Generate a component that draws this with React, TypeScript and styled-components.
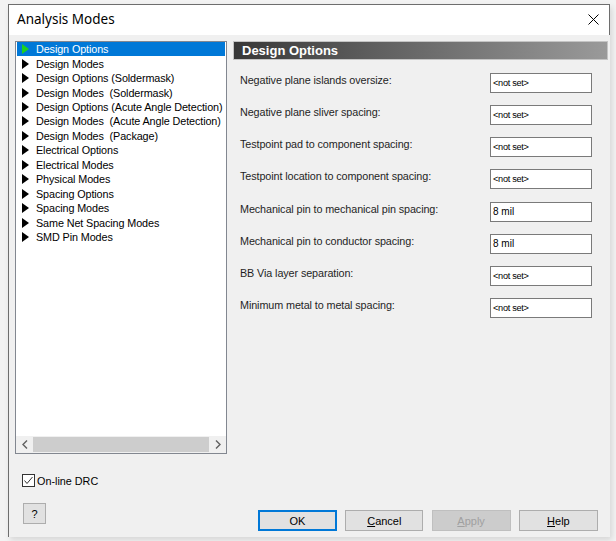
import React from "react";
import styled, { createGlobalStyle } from "styled-components";

const GlobalStyle = createGlobalStyle`
    html, body {
        margin: 0;
        padding: 0;
        background: #f3f3f3;
    }
    body {
        font-family: "Liberation Sans", Arial, sans-serif;
        font-size: 10.8px;
        color: #000;
    }
`;

const Page = styled.div`
    width: 616px;
    height: 541px;
    padding: 4px 0 0 8px;
    box-sizing: border-box;
`;

const Window = styled.div`
    width: 602px;
    height: 533px;
    display: flex;
    flex-direction: column;
    border-left: 1px solid #6e6e6e;
    border-top: 1px solid #6e6e6e;
    box-sizing: border-box;
    box-shadow: 2px 3px 6px rgba(0, 0, 0, 0.12);
`;

const TitleBar = styled.div`
    height: 30px;
    flex: none;
    display: flex;
    align-items: center;
    justify-content: space-between;
    background: #ffffff;
    border-right: 1px solid #6e6e6e;
    padding: 0 8px 0 8px;
`;

const Title = styled.span`
    font-family: "Noto Sans", "Liberation Sans", sans-serif;
    font-size: 13.5px;
    color: #000;
    margin-top: -2px;
`;

const CloseIcon = styled.svg`
    width: 11px;
    height: 11px;
    margin-right: 2px;
    margin-top: -2px;
`;

const Body = styled.div`
    flex: 1;
    display: flex;
    gap: 6px;
    background: #f0f0f0;
    padding: 6px 2px 0 6px;
`;

const LeftColumn = styled.div`
    width: 212px;
    display: flex;
    flex-direction: column;
`;

const ListBox = styled.div`
    height: 413px;
    display: flex;
    flex-direction: column;
    background: #ffffff;
    border: 1px solid #828790;
    box-sizing: border-box;
`;

const Items = styled.div`
    flex: 1;
    padding: 0 1px;
`;

const Item = styled.div<{ selected?: boolean }>`
    height: 14.46px;
    display: flex;
    align-items: center;
    gap: 7px;
    padding-left: 5px;
    white-space: pre;
    letter-spacing: -0.1px;
    background: ${p => (p.selected ? "#0078d7" : "transparent")};
    color: ${p => (p.selected ? "#ffffff" : "#000000")};
`;

const Arrow = styled.span<{ selected?: boolean }>`
    width: 0;
    height: 0;
    border-top: 5px solid transparent;
    border-bottom: 5px solid transparent;
    border-left: 7px solid ${p => (p.selected ? "#1fd01f" : "#000000")};
`;

const ScrollBar = styled.div`
    height: 17px;
    display: flex;
    align-items: stretch;
    background: #f0f0f0;
`;

const ScrollArrow = styled.div`
    width: 17px;
    display: flex;
    align-items: center;
    justify-content: center;
`;

const Thumb = styled.div`
    flex: 1;
    margin: 1px 0;
    background: #cdcdcd;
`;

const CheckRow = styled.label`
    display: flex;
    align-items: center;
    gap: 2px;
    margin: 20px 0 0 7px;
`;

const CheckBox = styled.span`
    width: 13px;
    height: 13px;
    box-sizing: border-box;
    border: 1px solid #333333;
    background: #ffffff;
    display: flex;
    align-items: center;
    justify-content: center;
`;

const Button = styled.div<{ primary?: boolean; disabled?: boolean; width?: number }>`
    width: ${p => p.width ?? 79}px;
    height: 21px;
    box-sizing: border-box;
    display: flex;
    align-items: center;
    justify-content: center;
    font-size: 11px;
    background: ${p => (p.disabled ? "#cccccc" : "#e1e1e1")};
    color: ${p => (p.disabled ? "#a0a0a0" : "#000000")};
    border: 1px solid ${p => (p.primary ? "#0078d7" : p.disabled ? "#bfbfbf" : "#adadad")};
    box-shadow: ${p => (p.primary ? "inset 0 0 0 1px #0078d7" : "none")};
`;

const HelpButton = styled(Button)`
    margin: 16px 0 0 8px;
    width: 23px;
`;

const Underline = styled.span`
    text-decoration: underline;
`;

const RightColumn = styled.div`
    flex: 1;
    display: flex;
    flex-direction: column;
`;

const Header = styled.div`
    height: 19px;
    box-sizing: border-box;
    display: flex;
    align-items: center;
    padding-left: 8px;
    border: 1px solid #c4c4c4;
    background: linear-gradient(to right, #383838 0%, #5c5c5c 35%, #9a9a9a 100%);
    color: #ffffff;
    font-weight: bold;
    font-size: 13px;
`;

const Form = styled.div`
    display: flex;
    flex-direction: column;
    padding: 13px 0 0 7px;
`;

const Row = styled.div`
    height: 32.15px;
    display: flex;
    align-items: flex-start;
`;

const Label = styled.span`
    width: 250px;
    line-height: 14px;
    letter-spacing: -0.1px;
    color: #1f1f1f;
`;

const ValueBox = styled.div<{ unset?: boolean }>`
    width: 102px;
    height: 20px;
    box-sizing: border-box;
    display: flex;
    align-items: center;
    padding-left: 2px;
    background: #ffffff;
    border: 1px solid #7a7a7a;
    font-size: ${p => (p.unset ? "9.2px" : "10px")};
    letter-spacing: ${p => (p.unset ? "-0.3px" : "0")};
`;

const Spacer = styled.div`
    flex: 1;
`;

const ButtonBar = styled.div`
    display: flex;
    gap: 8.3px;
    padding: 0 8px 6px 25px;
`;

const items = [
    "Design Options",
    "Design Modes",
    "Design Options (Soldermask)",
    "Design Modes  (Soldermask)",
    "Design Options (Acute Angle Detection)",
    "Design Modes  (Acute Angle Detection)",
    "Design Modes  (Package)",
    "Electrical Options",
    "Electrical Modes",
    "Physical Modes",
    "Spacing Options",
    "Spacing Modes",
    "Same Net Spacing Modes",
    "SMD Pin Modes",
];

const fields = [
    { label: "Negative plane islands oversize:", value: "<not set>" },
    { label: "Negative plane sliver spacing:", value: "<not set>" },
    { label: "Testpoint pad to component spacing:", value: "<not set>" },
    { label: "Testpoint location to component spacing:", value: "<not set>" },
    { label: "Mechanical pin to mechanical pin spacing:", value: "8 mil" },
    { label: "Mechanical pin to conductor spacing:", value: "8 mil" },
    { label: "BB Via layer separation:", value: "<not set>" },
    { label: "Minimum metal to metal spacing:", value: "<not set>" },
];

const App = (): JSX.Element => {
    return <Page>
        <GlobalStyle />
        <Window>
            <TitleBar>
                <Title>Analysis Modes</Title>
                <CloseIcon viewBox="0 0 11 11">
                    <path d="M0.5 0.5 L10.5 10.5 M10.5 0.5 L0.5 10.5" stroke="#000" strokeWidth="1" />
                </CloseIcon>
            </TitleBar>

            <Body>
                <LeftColumn>
                    <ListBox>
                        <Items>
                            {items.map((text, i) => (
                                <Item key={text} selected={i === 0}>
                                    <Arrow selected={i === 0} />
                                    <span>{text}</span>
                                </Item>
                            ))}
                        </Items>
                        <ScrollBar>
                            <ScrollArrow>
                                <svg width="6" height="9" viewBox="0 0 6 9">
                                    <path d="M5 0.5 L1 4.5 L5 8.5" fill="none" stroke="#606060" strokeWidth="1.4" />
                                </svg>
                            </ScrollArrow>
                            <Thumb />
                            <ScrollArrow>
                                <svg width="6" height="9" viewBox="0 0 6 9">
                                    <path d="M1 0.5 L5 4.5 L1 8.5" fill="none" stroke="#606060" strokeWidth="1.4" />
                                </svg>
                            </ScrollArrow>
                        </ScrollBar>
                    </ListBox>

                    <CheckRow>
                        <CheckBox>
                            <svg width="11" height="11" viewBox="0 0 11 11">
                                <path d="M1.5 5.5 L4 8.5 L9.5 2" fill="none" stroke="#333" strokeWidth="1" />
                            </svg>
                        </CheckBox>
                        <span>On-line DRC</span>
                    </CheckRow>

                    <HelpButton>?</HelpButton>
                </LeftColumn>

                <RightColumn>
                    <Header>Design Options</Header>
                    <Form>
                        {fields.map(f => (
                            <Row key={f.label}>
                                <Label>{f.label}</Label>
                                <ValueBox unset={f.value === "<not set>"}>{f.value}</ValueBox>
                            </Row>
                        ))}
                    </Form>
                    <Spacer />
                    <ButtonBar>
                        <Button primary>OK</Button>
                        <Button width={78}><Underline>C</Underline>ancel</Button>
                        <Button disabled><Underline>A</Underline>pply</Button>
                        <Button><Underline>H</Underline>elp</Button>
                    </ButtonBar>
                </RightColumn>
            </Body>
        </Window>
    </Page>;
};

export default App;
